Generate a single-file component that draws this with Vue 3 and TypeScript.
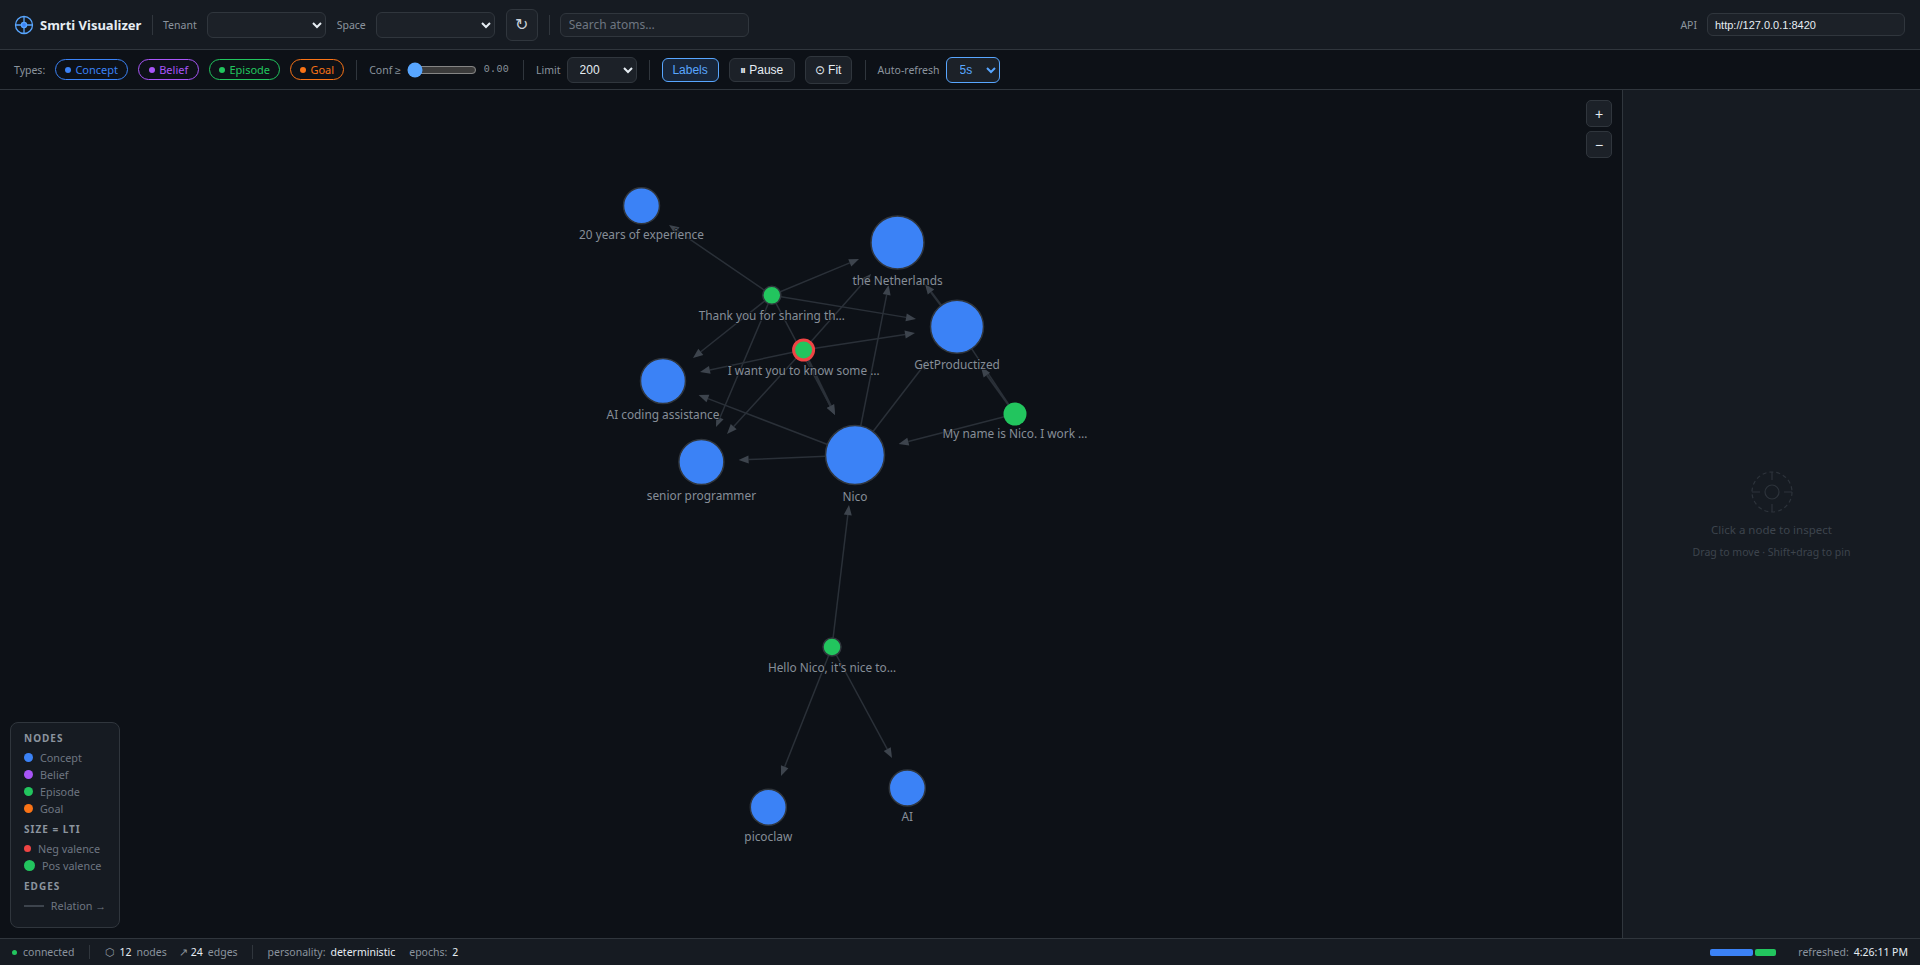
<script setup lang="ts">
interface GNode { label: string; x: number; y: number; r: number; c: string; s: string; sw: number; ly: number }
const B = '#3b82f6', G = '#22c55e', D = '#30363d'
const nodes: GNode[] = [
  { label: '20 years of experience', x: 641.5, y: 205.7, r: 18, c: B, s: D, sw: 1.5, ly: 238.7 },
  { label: 'the Netherlands', x: 897.5, y: 242.5, r: 26.5, c: B, s: D, sw: 1.5, ly: 284.7 },
  { label: 'GetProductized', x: 957, y: 326.7, r: 26.5, c: B, s: D, sw: 1.5, ly: 368.5 },
  { label: 'Thank you for sharing th…', x: 771.8, y: 295.3, r: 9, c: G, s: D, sw: 1.5, ly: 320.3 },
  { label: 'I want you to know some …', x: 803.6, y: 350, r: 10, c: G, s: '#ef4444', sw: 3, ly: 375.3 },
  { label: 'AI coding assistance', x: 663, y: 381, r: 22.5, c: B, s: D, sw: 1.5, ly: 419 },
  { label: 'senior programmer', x: 701.4, y: 462, r: 22.5, c: B, s: D, sw: 1.5, ly: 500 },
  { label: 'Nico', x: 855, y: 455, r: 29.5, c: B, s: D, sw: 1.5, ly: 501 },
  { label: 'My name is Nico. I work …', x: 1015, y: 414, r: 11.5, c: G, s: G, sw: 0, ly: 438.3 },
  { label: "Hello Nico, it's nice to…", x: 832, y: 647, r: 9, c: G, s: D, sw: 1.5, ly: 672 },
  { label: 'picoclaw', x: 768.3, y: 807.3, r: 18, c: B, s: D, sw: 1.5, ly: 841 },
  { label: 'AI', x: 907.3, y: 788, r: 18, c: B, s: D, sw: 1.5, ly: 821.3 },
]
// [source index, tip x, tip y, stroke width]
const rawEdges: [number, number, number, number][] = [
  [3, 669, 225, 1.5], [3, 859, 259, 1.5], [3, 916, 319, 1.5], [3, 693, 358, 1.5], [3, 716, 427, 1.5], [3, 835, 415, 1.5],
  [4, 871, 274, 1.5], [4, 915, 333, 1.5], [4, 700, 372, 1.5], [4, 727, 434, 1.5], [4, 835, 415, 2.5],
  [7, 888.6, 285, 1.5], [7, 928, 360, 1.5], [7, 698.6, 395, 1.5], [7, 738.6, 460, 1.5],
  [8, 981, 367, 2], [8, 898.6, 444, 1.5], [2, 925, 284, 2.2],
  [9, 849, 505, 1.5], [9, 781, 776, 1.5], [9, 892, 758, 1.5],
]
const edges = rawEdges.map(([s, tx, ty, w]) => {
  const n = nodes[s]
  const dx = tx - n.x, dy = ty - n.y
  const len = Math.hypot(dx, dy)
  const ux = dx / len, uy = dy / len
  const bx = tx - ux * 10, by = ty - uy * 10
  const pts = `${tx},${ty} ${bx - uy * 4},${by + ux * 4} ${bx + uy * 4},${by - ux * 4}`
  return { x1: n.x, y1: n.y, x2: bx, y2: by, pts, w }
})
const pills = [
  { t: 'Concept', c: '#3b82f6' },
  { t: 'Belief', c: '#a855f7' },
  { t: 'Episode', c: '#22c55e' },
  { t: 'Goal', c: '#f97316' },
]
</script>

<template>
  <div class="app">
    <header class="topbar">
      <div class="brand">
        <svg width="20" height="20" viewBox="0 0 20 20" fill="none" stroke="#58a6ff" stroke-width="1.3">
          <circle cx="10" cy="10" r="8.5" />
          <circle cx="10" cy="10" r="2.6" fill="#3b82f6" />
          <path d="M10 1.5V7.4M10 12.6v5.9M1.5 10h5.9M12.6 10h5.9" />
        </svg>
        <span class="title">Smrti Visualizer</span>
      </div>
      <i class="sep t-sep1"></i>
      <label class="lab">Tenant</label>
      <select class="sel ctx"><option></option></select>
      <label class="lab">Space</label>
      <select class="sel ctx"><option></option></select>
      <button class="btn refresh">↻</button>
      <i class="sep"></i>
      <input class="search" placeholder="Search atoms…" />
      <div class="grow"></div>
      <label class="lab">API</label>
      <input class="api" value="http://127.0.0.1:8420" />
    </header>

    <div class="toolbar">
      <span class="lab">Types:</span>
      <div class="pills">
        <span v-for="p in pills" :key="p.t" class="pill" :style="{ borderColor: p.c, color: p.c }">
          <b class="pdot" :style="{ background: p.c }"></b>{{ p.t }}
        </span>
      </div>
      <i class="sep"></i>
      <span class="lab">Conf ≥</span>
      <input class="range" type="range" min="0" max="1" step="0.01" value="0" />
      <span class="mono">0.00</span>
      <i class="sep"></i>
      <span class="lab">Limit</span>
      <select class="sel limit"><option>200</option></select>
      <i class="sep"></i>
      <button class="btn labels">Labels</button>
      <button class="btn pause">⏸ Pause</button>
      <button class="btn fit">⊙ Fit</button>
      <i class="sep"></i>
      <span class="lab">Auto-refresh</span>
      <select class="sel auto"><option>5s</option></select>
    </div>

    <main class="main">
      <section class="canvas">
        <svg class="graph" width="1622" height="848" viewBox="0 90 1622 848">
          <line :x1="nodes[2].x" :y1="nodes[2].y" :x2="nodes[8].x" :y2="nodes[8].y" stroke="#2a3038" stroke-width="1.5" />
          <g v-for="(e, i) in edges" :key="i">
            <line :x1="e.x1" :y1="e.y1" :x2="e.x2" :y2="e.y2" stroke="#2a3038" :stroke-width="e.w" />
            <polygon :points="e.pts" fill="#3d444d" />
          </g>
          <g v-for="n in nodes" :key="n.label">
            <circle :cx="n.x" :cy="n.y" :r="n.r" :fill="n.c" :stroke="n.s" :stroke-width="n.sw" />
            <text :x="n.x" :y="n.ly" class="nlabel" text-anchor="middle">{{ n.label }}</text>
          </g>
        </svg>
        <div class="zoom">
          <button class="zbtn">+</button>
          <button class="zbtn">−</button>
        </div>
        <div class="legend">
          <h4>NODES</h4>
          <div v-for="p in pills" :key="p.t" class="lrow"><b class="ld" :style="{ background: p.c }"></b>{{ p.t }}</div>
          <h4>SIZE = LTI</h4>
          <div class="lrow neg"><b class="ld"></b>Neg valence</div>
          <div class="lrow pos"><b class="ld"></b>Pos valence</div>
          <h4>EDGES</h4>
          <div class="lrow rel"><b class="ll"></b>Relation →</div>
        </div>
      </section>
      <aside class="panel">
        <svg width="44" height="44" viewBox="0 0 44 44" fill="none" stroke="#2d333b" stroke-width="1.2">
          <circle cx="22" cy="22" r="20" stroke-dasharray="4 3" />
          <circle cx="22" cy="22" r="7" />
          <path d="M22 2v8M22 34v8M2 22h8M34 22h8" />
        </svg>
        <div class="p1">Click a node to inspect</div>
        <div class="p2">Drag to move · Shift+drag to pin</div>
      </aside>
    </main>

    <footer class="status">
      <b class="sdot"></b><span class="k">connected</span>
      <i class="sep s"></i>
      <span class="k ic">⬡</span><span class="v">12</span><span class="k n">nodes</span>
      <span class="k ic i2">↗</span><span class="v">24</span><span class="k">edges</span>
      <i class="sep s"></i>
      <span class="k">personality:</span><span class="v">deterministic</span>
      <span class="k i3">epochs:</span><span class="v">2</span>
      <div class="grow"></div>
      <div class="bars"><b class="b1"></b><b class="b2"></b></div>
      <span class="k i4">refreshed:</span><span class="v time">4:26:11 PM</span>
    </footer>
  </div>
</template>

<style>
html, body { margin: 0; background: #0d1117; }
</style>

<style scoped>
.app {
  width: 1920px; height: 965px; display: flex; flex-direction: column; overflow: hidden;
  background: #0d1117; color: #e6edf3; font-family: "Noto Sans", sans-serif; font-size: 11px; color-scheme: dark;
}
.topbar { height: 49px; background: #161b22; border-bottom: 1px solid #30363d; display: flex; align-items: center; padding: 0 15px 0 14px; flex: none; }
.brand { display: flex; align-items: center; gap: 6px; }
.title { font-size: 13px; font-weight: 700; color: #e6edf3; width: 103px; white-space: nowrap; }
.sep { display: block; width: 1px; height: 20px; background: #30363d; flex: none; }
.t-sep1 { margin: 0 10px 0 9px; }
.lab { font-size: 10.5px; color: #8b949e; white-space: nowrap; }
.topbar .lab { margin-right: 10px; }
.sel { font-family: "Liberation Sans", sans-serif; background: #1c2128; border: 1px solid #30363d; border-radius: 6px; color: #e6edf3; font-size: 12px; box-sizing: border-box; padding: 0 2px 0 8px; }
.ctx { width: 119px; height: 26px; margin-right: 11px; }
.btn { font-family: "Liberation Sans", sans-serif; background: #1c2128; border: 1px solid #30363d; border-radius: 6px; color: #e6edf3; font-size: 12px; box-sizing: border-box; padding: 0; }
.refresh { width: 32px; height: 32px; font-size: 16px; margin-right: 11px; font-family: "DejaVu Sans", sans-serif; color: #c9d1d9; }
.search { width: 189px; height: 24px; box-sizing: border-box; margin-left: 10px; background: #1c2128; border: 1px solid #30363d; border-radius: 6px; padding: 0 8px; color: #e6edf3; font-family: "Noto Sans", sans-serif; font-size: 12px; }
.search::placeholder { color: #6e7681; }
.grow { flex: 1; }
.api { width: 198px; height: 23px; box-sizing: border-box; background: #1c2128; border: 1px solid #30363d; border-radius: 6px; padding: 0 7px; color: #e6edf3; font-family: "Liberation Sans", sans-serif; font-size: 11px; }
.toolbar { height: 39px; background: #0d1117; border-bottom: 1px solid #30363d; display: flex; align-items: center; padding: 0 14px; flex: none; }
.pills { display: flex; gap: 10px; margin-left: 10px; margin-right: 12px; }
.pill { display: flex; align-items: center; justify-content: center; gap: 4px; height: 21px; box-sizing: border-box; border: 1px solid; border-radius: 11px; font-size: 11px; }
.pill:nth-child(1) { width: 73px; }
.pill:nth-child(2) { width: 61px; }
.pill:nth-child(3) { width: 71px; }
.pill:nth-child(4) { width: 54px; }
.pdot { width: 6px; height: 6px; border-radius: 50%; }
.toolbar .sep { margin-right: 12px; }
.range { width: 70px; margin: 0 7px 0 6px; height: 14px; accent-color: #58a6ff; }
.mono { font-family: "Liberation Mono", monospace; font-size: 10px; color: #8b949e; margin-right: 14px; letter-spacing: .3px; }
.limit { width: 70px; height: 26px; margin: 0 12px 0 6px; }
.labels { width: 57px; height: 24px; border-color: #58a6ff; color: #58a6ff; background: #18263a; margin-right: 10px; }
.pause { width: 66px; height: 24px; margin-right: 10px; }
.fit { width: 47px; height: 28px; margin-right: 13px; }
.auto { width: 54px; height: 26px; margin-left: 6px; border-color: #58a6ff; color: #58a6ff; padding-left: 9px; }
.main { flex: 1; display: flex; min-height: 0; }
.canvas { position: relative; flex: 1; background: #0d1117; }
.graph { display: block; }
.nlabel { font-size: 11.85px; fill: #868e98; font-family: "Noto Sans", sans-serif; paint-order: stroke; stroke: #0d1117; stroke-width: 2px; stroke-opacity: .75; }
.zoom { position: absolute; top: 10px; right: 10px; display: flex; flex-direction: column; gap: 4px; }
.zbtn { width: 26px; height: 27px; background: #1c2128; border: 1px solid #30363d; border-radius: 5px; color: #e6edf3; font-size: 14px; padding: 0; font-family: "Liberation Sans", sans-serif; }
.legend { position: absolute; left: 10px; bottom: 10px; width: 110px; height: 206px; box-sizing: border-box; background: #161b22; border: 1px solid #30363d; border-radius: 8px; padding: 5px 13px; }
.legend h4 { margin: 5px 0 4px; font-size: 10px; line-height: 14px; letter-spacing: 1px; font-weight: 700; color: #8b949e; }
.legend h4:first-child { margin-top: 3px; }
.lrow { display: flex; align-items: center; height: 17px; gap: 7px; color: #6e7681; font-size: 10.8px; white-space: nowrap; }
.ld { width: 9px; height: 9px; border-radius: 50%; flex: none; }
.neg .ld { width: 7px; height: 7px; background: #ef4444; }
.pos .ld { width: 11px; height: 11px; background: #22c55e; }
.ll { width: 20px; height: 2px; background: #3d444d; }
.panel { width: 298px; flex: none; box-sizing: border-box; background: #161b22; border-left: 1px solid #30363d; display: flex; flex-direction: column; align-items: center; justify-content: center; }
.p1 { font-size: 11.5px; color: #3d444d; margin-top: 8px; }
.p2 { font-size: 10.5px; color: #3d444d; margin-top: 8px; }
.status { height: 27px; box-sizing: border-box; background: #161b22; border-top: 1px solid #30363d; display: flex; align-items: center; padding: 0 12px; flex: none; font-size: 10.5px; }
.sdot { width: 5px; height: 5px; border-radius: 50%; background: #22c55e; margin-right: 6px; }
.k { color: #8b949e; margin-right: 5px; white-space: nowrap; }
.v { color: #e6edf3; margin-right: 5px; white-space: nowrap; }
.status .sep.s { height: 14px; margin: 0 15px 0 9px; }
.ic { margin-right: 5px; }
.n { margin-right: 4px; }
.i2 { margin-left: 8px; margin-right: 3px; }
.i3 { margin-left: 9px; }
.bars { display: flex; gap: 2px; }
.bars b { display: block; height: 7px; border-radius: 2px; }
.b1 { width: 43px; background: #3b82f6; }
.b2 { width: 21px; background: #22c55e; }
.i4 { margin-left: 22px; }
.time { margin-right: 0; }
</style>
